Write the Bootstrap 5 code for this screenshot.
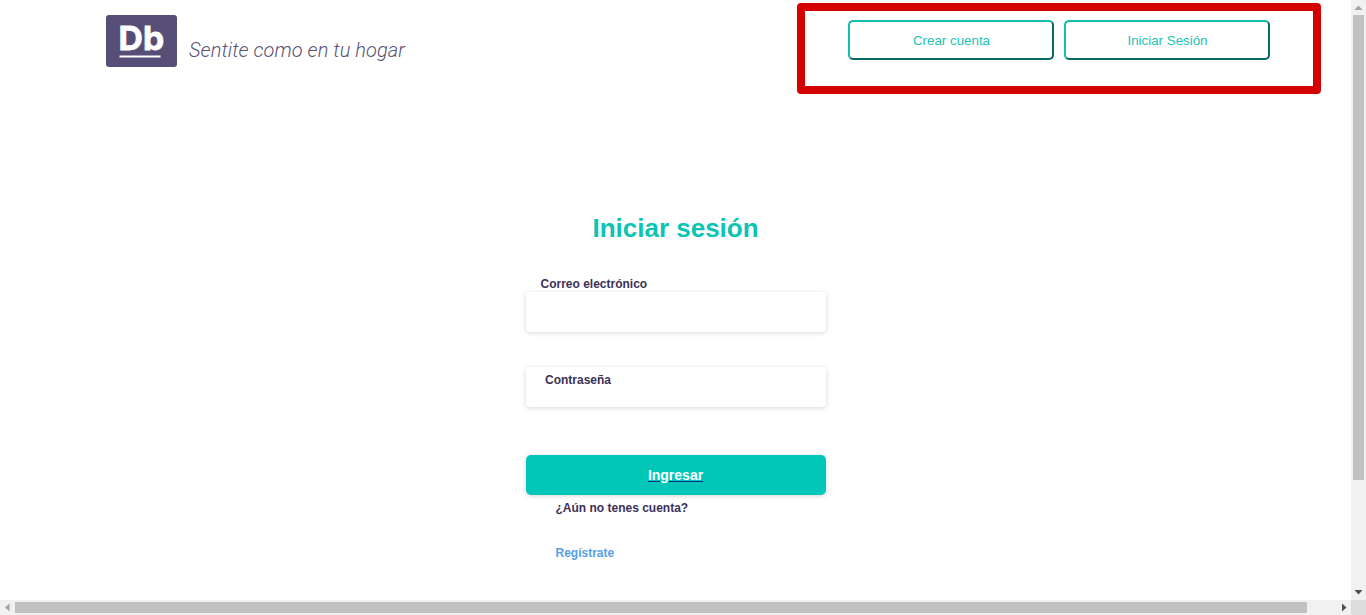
<!DOCTYPE html>
<html lang="es">
<head>
<meta charset="utf-8">
<meta name="viewport" content="width=device-width, initial-scale=1">
<title>Iniciar sesión</title>
<link href="https://cdn.jsdelivr.net/npm/bootstrap@5.3.0/dist/css/bootstrap.min.css" rel="stylesheet">
<style>
  body { font-family: "Liberation Sans", Arial, sans-serif; color: #3b3158; background: #fff; }
  .window { display: grid; grid-template: minmax(0, 1fr) 15px / minmax(0, 1fr) 15px; height: 100vh; }
  .topbar { padding: 3px 30px 0 106px; }
  .brand { margin-top: 12px; gap: 12px; }
  .brand svg { display: block; }
  .slogan { font: italic 300 20px/24px Roboto, sans-serif; letter-spacing: .07px; color: #5a5277; padding-top: 23px; white-space: nowrap; }
  .account-frame { width: 524px; height: 91px; border: 8px solid #d40000; border-radius: 4px; padding: 9px 0 0 43px; gap: 10px; }
  .btn-account { width: 206px; height: 40px; padding: 1px 0 0 1px; font-size: 13.33px; color: #1dc3b3; background: #fff; border: 2px solid; border-color: #12bfae #066b62 #066b62 #12bfae; border-radius: 5px; }
  .login { width: 300px; margin-top: 118px; font-size: 12px; line-height: 14px; font-weight: 700; }
  .login h1 { font-size: 26px; line-height: 32px; color: #0cc4b4; }
  .login .field { height: 40px; border: 0; border-radius: 4px; padding: 0 15px; box-shadow: 0 1px 5px rgba(0,0,0,.16); }
  .login label { display: block; }
  .label-mail { margin: 33px 0 1px 15px; }
  .password { margin-top: 35px; }
  .password label { position: absolute; left: 19.5px; top: 6px; }
  .btn-login { height: 40px; margin-top: 48px; padding: 0; border: 0; border-radius: 5px; background: #00c7b7 !important; font-size: 14px; font-weight: 700; line-height: 40px; text-decoration: underline #1a2a90 !important; box-shadow: 0 1px 5px rgba(0,0,0,.16); }
  .signup { margin: 6px 0 0 30px; }
  .signup a { display: block; margin-top: 31px; color: #559fe6; text-decoration: none; }
  .track { background: #f1f1f1; }
  .track svg { flex: none; display: block; }
  .thumb { background: #c1c1c1; }
  .track-y .thumb { width: 11px; height: 465px; }
  .track-x .thumb { height: 11px; width: 1292px; }
  .corner { background: #dcdcdc; }
</style>
</head>
<body class="overflow-hidden">
<div class="window">
  <div class="overflow-hidden">
    <header class="topbar d-flex justify-content-between align-items-start">
      <div class="brand d-flex">
        <svg width="71" height="52" viewBox="0 0 71 52" role="img" aria-label="Db">
          <rect width="71" height="52" rx="3" fill="#574e78"/>
          <text x="12.6" y="34.8" textLength="45.5" lengthAdjust="spacingAndGlyphs" font-family="Inter, sans-serif" font-weight="700" font-size="33" fill="#fff" stroke="#fff" stroke-width=".8">Db</text>
          <rect x="13.5" y="40.5" width="41" height="2" fill="#fff"/>
        </svg>
        <span class="slogan">Sentite como en tu hogar</span>
      </div>
      <div class="account-frame d-flex align-items-start">
        <button class="btn btn-account" type="button">Crear cuenta</button>
        <button class="btn btn-account" type="button">Iniciar Sesión</button>
      </div>
    </header>
    <main class="login mx-auto">
      <h1 class="fw-bold text-center mb-0">Iniciar sesión</h1>
      <label class="label-mail" for="mail">Correo electrónico</label>
      <input class="field form-control" id="mail" type="email">
      <div class="password position-relative">
        <input class="field form-control" id="password" type="password">
        <label for="password">Contraseña</label>
      </div>
      <a class="btn btn-login d-block" href="#"><span class="text-white">Ingresar</span></a>
      <div class="signup">
        <div>¿Aún no tenes cuenta?</div>
        <a href="#">Regístrate</a>
      </div>
    </main>
  </div>
  <div class="track track-y d-flex flex-column align-items-center">
    <svg width="15" height="15"><path d="M3.5 10 7.5 5.5 11.5 10Z" fill="#a3a3a3"/></svg>
    <div class="thumb"></div>
    <svg class="mt-auto" width="15" height="15"><path d="M3.5 5h8L7.5 9.5Z" fill="#505050"/></svg>
  </div>
  <div class="track track-x d-flex align-items-center">
    <svg width="15" height="15"><path d="M9.5 3.5v8L5 7.5Z" fill="#a3a3a3"/></svg>
    <div class="thumb"></div>
    <svg class="ms-auto" width="15" height="15"><path d="M6 3.5v8l4.5-4Z" fill="#505050"/></svg>
  </div>
  <div class="corner"></div>
</div>
<script src="https://cdn.jsdelivr.net/npm/bootstrap@5.3.0/dist/js/bootstrap.bundle.min.js"></script>
</body>
</html>
